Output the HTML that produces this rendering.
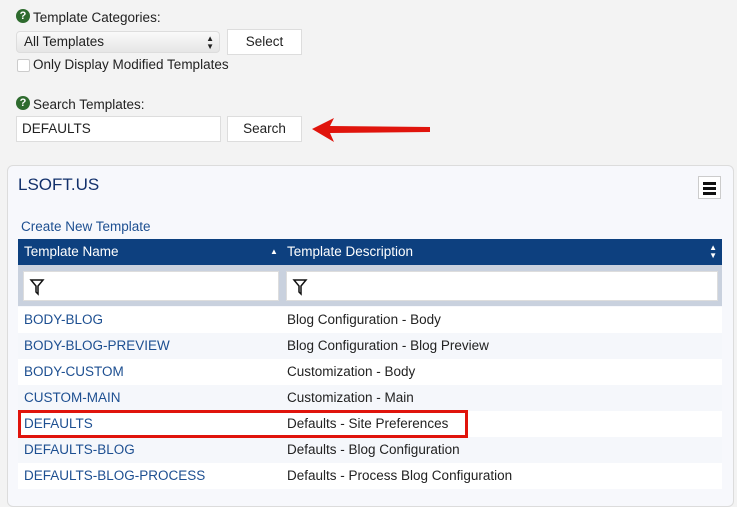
<!DOCTYPE html>
<html><head><style>
body{margin:0;width:737px;height:494px;overflow:hidden;background:#f3f3f3;font-family:"Liberation Sans",sans-serif;font-size:13.5px;color:#222;position:relative}
.a{position:absolute}
.q{width:14px;height:14px;border-radius:50%;background:#2e6b2e;color:#fff;font-size:11px;font-weight:bold;text-align:center;line-height:14px}
.btn{background:#fff;border:1px solid #ddd;text-align:center;box-sizing:border-box}
.inp{background:#fff;border:1px solid #ddd;box-sizing:border-box}
.row{position:absolute;left:18px;width:704px;height:26px;line-height:26px}
.row span{position:absolute}
.n{left:6px;color:#1d4f91}
.d{left:269px;color:#222}
</style></head><body>
<div class="a q" style="left:16px;top:9px">?</div>
<div class="a" style="left:33px;top:10px">Template Categories:</div>
<div class="a" style="left:16px;top:31px;width:204px;height:22px;border-radius:4px;background:linear-gradient(#fafafa,#e6e6e6);border:1px solid #ddd;box-sizing:border-box;line-height:20px;padding-left:7px">All Templates<span style="position:absolute;right:5px;top:0;font-size:8px;line-height:8px;top:3px">▲<br>▼</span></div>
<div class="a btn" style="left:227px;top:29px;width:75px;height:26px;line-height:24px">Select</div>
<div class="a" style="left:17px;top:59px;width:11px;height:11px;border:1px solid #ccc;border-radius:2px;background:#fff"></div>
<div class="a" style="left:33px;top:57px">Only Display Modified Templates</div>
<div class="a q" style="left:16px;top:96px">?</div>
<div class="a" style="left:33px;top:97px">Search Templates:</div>
<div class="a inp" style="left:16px;top:116px;width:205px;height:26px;line-height:24px;padding-left:5px">DEFAULTS</div>
<div class="a btn" style="left:227px;top:116px;width:75px;height:26px;line-height:24px">Search</div>
<svg class="a" style="left:308px;top:116px" width="125" height="28"><path d="M4 13 L26 2 L22 10 L122 11 L122 16 L22 17 L26 26 Z" fill="#e0140c"/></svg>
<div class="a" style="left:7px;top:165px;width:725px;height:340px;background:#f7f8fc;border:1px solid #dcdcdc;border-radius:6px"></div>
<div class="a" style="left:18px;top:175px;font-size:17px;color:#12306b">LSOFT.US</div>
<div class="a btn" style="left:698px;top:176px;width:23px;height:23px;border-color:#ccc;padding-top:5px"><div style="margin:0 auto;width:13px;height:3px;background:#111;box-shadow:0 5px 0 #111,0 10px 0 #111"></div></div>
<div class="a" style="left:21px;top:219px;color:#1d4f91">Create New Template</div>
<div class="a" style="left:18px;top:239px;width:704px;height:26px;background:#0d407f;color:#fff;line-height:26px">
<span class="a" style="left:6px">Template Name</span><span class="a" style="left:252px;font-size:8px">▲</span><span class="a" style="left:269px">Template Description</span><span class="a" style="right:5px;font-size:8px;line-height:8px;top:5px">▲<br>▼</span></div>
<div class="a" style="left:18px;top:265px;width:704px;height:41px;background:#c9d1de"></div>
<div class="a inp" style="left:23px;top:271px;width:256px;height:30px"><svg width="20" height="20" style="margin:5px 0 0 4px"><path d="M3 3 H15 L10 9 V17 L8 15 V9 Z" fill="none" stroke="#111" stroke-width="1.5"/></svg></div>
<div class="a inp" style="left:286px;top:271px;width:432px;height:30px"><svg width="20" height="20" style="margin:5px 0 0 4px"><path d="M3 3 H15 L10 9 V17 L8 15 V9 Z" fill="none" stroke="#111" stroke-width="1.5"/></svg></div>
<div class="row" style="top:307px;background:#fff"><span class="n">BODY-BLOG</span><span class="d">Blog Configuration - Body</span></div>
<div class="row" style="top:333px;background:#f5f7fb"><span class="n">BODY-BLOG-PREVIEW</span><span class="d">Blog Configuration - Blog Preview</span></div>
<div class="row" style="top:359px;background:#fff"><span class="n">BODY-CUSTOM</span><span class="d">Customization - Body</span></div>
<div class="row" style="top:385px;background:#f5f7fb"><span class="n">CUSTOM-MAIN</span><span class="d">Customization - Main</span></div>
<div class="row" style="top:411px;background:#fff"><span class="n">DEFAULTS</span><span class="d">Defaults - Site Preferences</span></div>
<div class="row" style="top:437px;background:#f5f7fb"><span class="n">DEFAULTS-BLOG</span><span class="d">Defaults - Blog Configuration</span></div>
<div class="row" style="top:463px;background:#fff"><span class="n">DEFAULTS-BLOG-PROCESS</span><span class="d">Defaults - Process Blog Configuration</span></div>
<div class="a" style="left:18px;top:410px;width:444px;height:22px;border:3px solid #e0140c"></div>
</body></html>
